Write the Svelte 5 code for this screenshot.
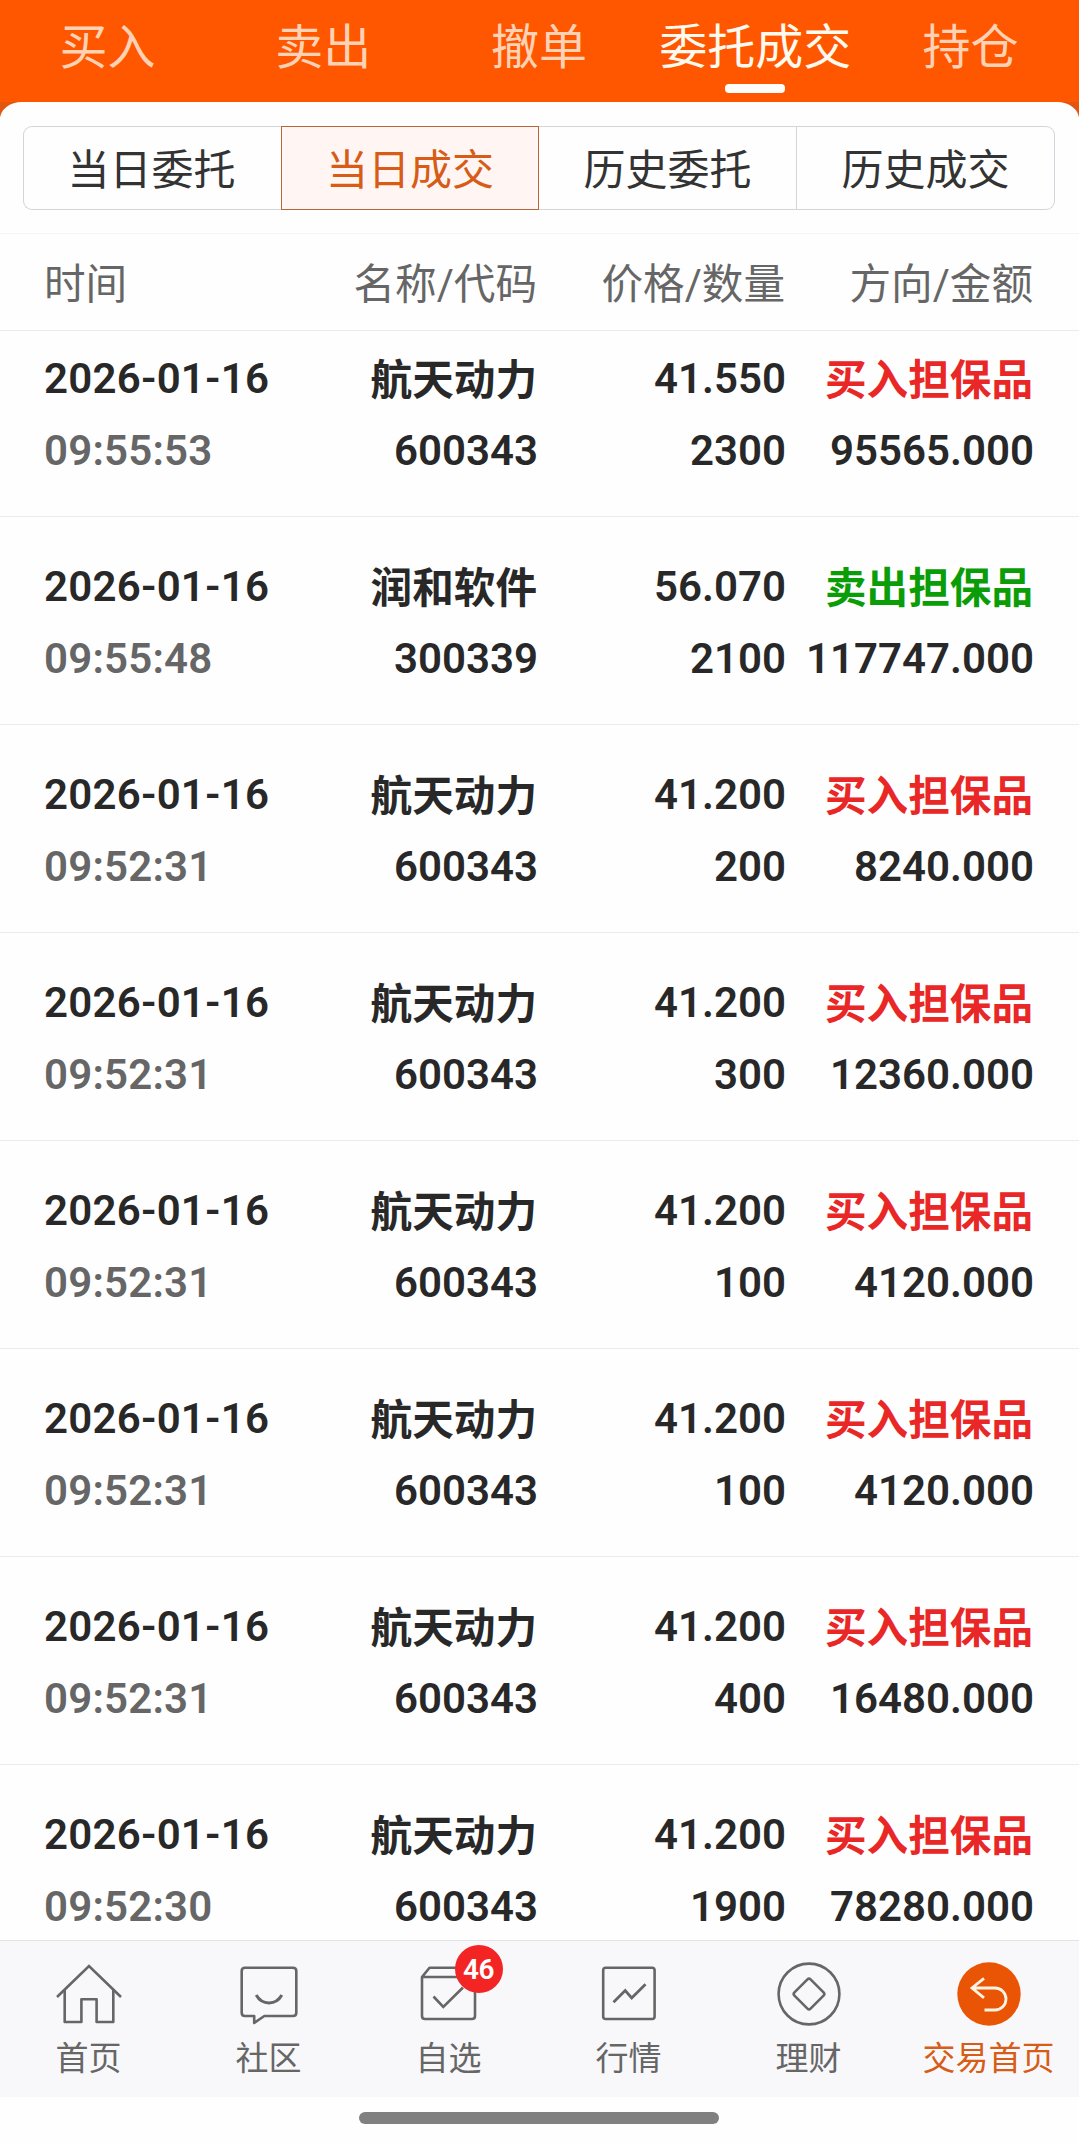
<script>
  const tabs = ['买入', '卖出', '撤单', '委托成交', '持仓'];
  const activeTab = '委托成交';
  const segments = ['当日委托', '当日成交', '历史委托', '历史成交'];
  const activeSegment = '当日成交';
  const headings = ['时间', '名称/代码', '价格/数量', '方向/金额'];

  const trades = [
    { time: '09:55:53', name: '航天动力', code: '600343', price: '41.550', qty: '2300', side: 'buy', amount: '95565.000' },
    { time: '09:55:48', name: '润和软件', code: '300339', price: '56.070', qty: '2100', side: 'sell', amount: '117747.000' },
    { time: '09:52:31', name: '航天动力', code: '600343', price: '41.200', qty: '200', side: 'buy', amount: '8240.000' },
    { time: '09:52:31', name: '航天动力', code: '600343', price: '41.200', qty: '300', side: 'buy', amount: '12360.000' },
    { time: '09:52:31', name: '航天动力', code: '600343', price: '41.200', qty: '100', side: 'buy', amount: '4120.000' },
    { time: '09:52:31', name: '航天动力', code: '600343', price: '41.200', qty: '100', side: 'buy', amount: '4120.000' },
    { time: '09:52:31', name: '航天动力', code: '600343', price: '41.200', qty: '400', side: 'buy', amount: '16480.000' },
    { time: '09:52:30', name: '航天动力', code: '600343', price: '41.200', qty: '1900', side: 'buy', amount: '78280.000' }
  ];
  const date = '2026-01-16';
  const sideLabel = { buy: '买入担保品', sell: '卖出担保品' };

  const nav = [
    { id: 'home', label: '首页' },
    { id: 'community', label: '社区' },
    { id: 'watch', label: '自选', badge: 46 },
    { id: 'market', label: '行情' },
    { id: 'wealth', label: '理财' },
    { id: 'trade', label: '交易首页', active: true }
  ];
</script>

<div class="screen">
  <header class="tabs">
    {#each tabs as tab}
      <div class="tab" class:active={tab === activeTab}>{tab}</div>
    {/each}
  </header>

  <div class="panel-back">
    <div class="panel">
      <div class="segments">
        {#each segments as s}
          <div class="segment" class:active={s === activeSegment}>{s}</div>
        {/each}
      </div>
    </div>
  </div>

  <div class="grid headings">
    {#each headings as h}<span>{h}</span>{/each}
  </div>

  <main class="list">
    {#each trades as t}
      <div class="grid row">
        <div><p class="date">{date}</p><p class="time">{t.time}</p></div>
        <div><p class="cjk">{t.name}</p><p class="num">{t.code}</p></div>
        <div><p class="num">{t.price}</p><p class="num">{t.qty}</p></div>
        <div><p class="cjk {t.side}">{sideLabel[t.side]}</p><p class="num">{t.amount}</p></div>
      </div>
    {/each}
  </main>

  <nav>
    {#each nav as n}
      <div class="item" class:active={n.active}>
        <div class="icon">
          <svg width="72" height="72" viewBox="-36 -36 72 72" fill="none" stroke="currentColor" stroke-width="2.6" stroke-linejoin="round">
            {#if n.id === 'home'}
              <path d="M-32 3 L0 -28 L32 3" stroke-linejoin="miter" />
              <path d="M-24.3 -4 V28 H-7.6 V5.2 H7.6 V28 H24.3 V-4" />
            {:else if n.id === 'community'}
              <path d="M-24 -26.2 H24 Q27.3 -26.2 27.3 -23 V18.8 Q27.3 22 24 22 H-4.7 L-14.8 29 V22 H-24 Q-27.3 22 -27.3 18.8 V-23 Q-27.3 -26.2 -24 -26.2 Z" />
              <path d="M-12.8 1 C-7 11.5 7 11.5 12.8 1" stroke-width="3" />
            {:else if n.id === 'watch'}
              <path d="M-27 -17 L-19.5 -26.3 H19 L26 -17 V22 Q26 25 23 25 H-24 Q-27 25 -27 22 Z M-27 -17 H26" />
              <path d="M-15.5 2.5 L-5.7 13 L14 -6.5" stroke-linejoin="miter" />
            {:else if n.id === 'market'}
              <rect x="-25.8" y="-26.2" width="51.4" height="51.2" rx="2.5" />
              <path d="M-15.5 8.3 L-3.8 -3.4 L2.7 4 L16.5 -9.7" stroke-width="2.8" stroke-linejoin="miter" />
            {:else if n.id === 'wealth'}
              <circle r="30.4" />
              <rect x="-11.4" y="-11.4" width="22.8" height="22.8" rx="2.2" transform="rotate(45)" />
            {:else}
              <circle r="31.7" fill="#e95504" stroke="none" />
              <path d="M-5 -15.6 L-17 -6 L-5 3.8 M-17 -6 H6 A11 11 0 0 1 6 16 H-4.5" stroke="#fff3e4" stroke-width="2.8" stroke-linejoin="miter" />
            {/if}
          </svg>
          {#if n.badge}<b class="badge">{n.badge}</b>{/if}
        </div>
        <span class="label">{n.label}</span>
      </div>
    {/each}
  </nav>
  <div class="gesture"><i></i></div>
</div>

<style>
  :global(body) { margin: 0; background: #fff; }
  .screen {
    width: 1079px;
    height: 2144px;
    display: flex;
    flex-direction: column;
    overflow: hidden;
    background: #fefefe;
    color: #282828;
    font-family: Roboto, 'Noto Sans CJK SC', sans-serif;
    font-size: 42px;
  }
  .tabs {
    flex: none;
    height: 102px;
    display: grid;
    grid-template-columns: repeat(5, 1fr);
    background: #ff5700;
    color: #ffd2b5;
    font-size: 48px;
    line-height: 96px;
    text-align: center;
  }
  .tab { white-space: nowrap; margin-left: -1px; }
  .tab.active { color: #fffaf0; margin-left: 0; }
  .tab.active::after {
    content: '';
    display: block;
    width: 60px;
    height: 9px;
    margin: -12px auto 0;
    border-radius: 4px;
    background: #fffdfa;
  }
  .panel-back {
    flex: none;
    background: linear-gradient(#e2560f 15px, #fefefe 15px);
  }
  .panel {
    height: 131px;
    padding: 24px 24px 0 23px;
    box-sizing: border-box;
    border-radius: 22px 22px 0 0 / 17px 17px 0 0;
    background: #fefefe;
  }
  .segments { display: grid; grid-template-columns: repeat(4, 1fr); height: 84px; }
  .segment {
    box-sizing: border-box;
    height: 84px;
    padding-top: 6px;
    border: 1px solid #d4d5da;
    border-left-width: 0;
    text-align: center;
    line-height: 76px;
    color: #333;
  }
  .segment:first-child { padding-right: 2px; border-left-width: 1px; border-right: 0; border-radius: 9px 0 0 9px; }
  .segment:last-child { border-radius: 0 9px 9px 0; }
  .segment.active { border: 1px solid #b9643a; background: #fff6f3; color: #d75c17; }
  .grid {
    display: grid;
    grid-template-columns: 245px 248px 248px 248px;
    padding-left: 44px;
    text-align: right;
  }
  .grid > :first-child { text-align: left; }
  .headings {
    flex: none;
    height: 96px;
    border-top: 1px solid #f5f5f6;
    border-bottom: 1px solid #ebebec;
    line-height: 101px;
    color: #666;
    font-size: 41.6px;
    box-sizing: content-box;
  }
  .headings span { height: 96px; }
  .list { flex: 1; min-height: 0; overflow: hidden; }
  .row {
    padding-top: 34px;
    padding-bottom: 29px;
    border-bottom: 1px solid #ebebec;
    font-weight: 600;
    line-height: 72px;
    white-space: nowrap;
  }
  .row:first-child { padding-top: 12px; }
  .row > div { display: flex; flex-direction: column; align-items: flex-end; }
  .row > div:first-child { align-items: flex-start; }
  p { margin: 0; }
  .cjk { height: 72px; line-height: 75px; font-size: 41.6px; font-weight: 700; }
  .num { margin-right: -1px; }
  .date { letter-spacing: 0.25px; }
  .time { color: #666; letter-spacing: 0.2px; }
  .buy { color: #e92726; }
  .sell { color: #0a9d08; }
  nav {
    flex: none;
    height: 156px;
    display: grid;
    grid-template-columns: repeat(6, 180px);
    border-top: 1px solid #e2e2e4;
    background: #f8f8fa;
    color: #666;
  }
  .item { display: flex; flex-direction: column; align-items: center; padding-top: 17px; padding-right: 3px; }
  .item.active { color: #d75c17; }
  .icon { position: relative; height: 72px; }
  svg { display: block; }
  .badge {
    position: absolute;
    left: 42px;
    top: -13px;
    width: 48px;
    height: 48px;
    border-radius: 50%;
    background: #f32524;
    color: #fff;
    font-size: 28px;
    font-weight: 600;
    line-height: 49px;
    letter-spacing: -0.5px;
    text-align: center;
  }
  .label { font-size: 33px; line-height: 57px; white-space: nowrap; }
  .gesture { flex: none; height: 47px; display: flex; justify-content: center; padding-right: 1px; }
  .gesture i { width: 360px; height: 12px; margin-top: 15px; border-radius: 6px; background: #808080; }
</style>
